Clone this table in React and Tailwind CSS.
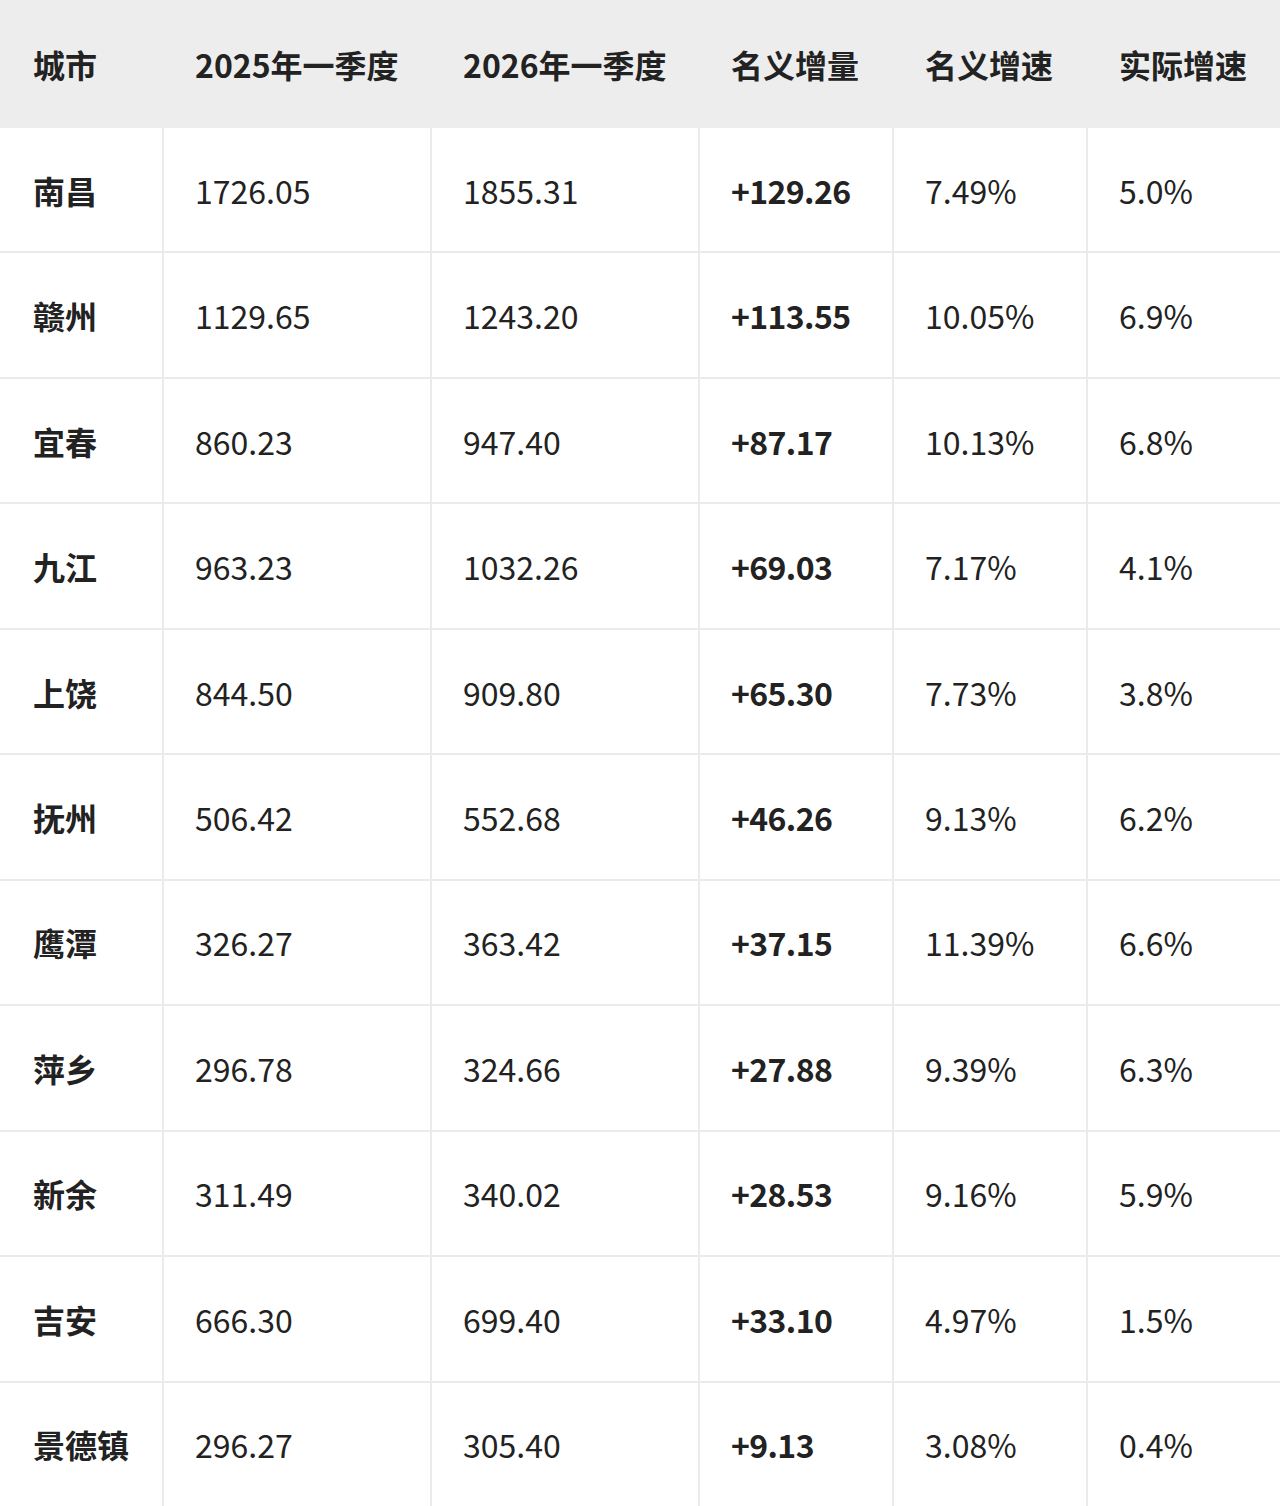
import React from 'react';

const rows = [
  ['南昌', '1726.05', '1855.31', '+129.26', '7.49%', '5.0%'],
  ['赣州', '1129.65', '1243.20', '+113.55', '10.05%', '6.9%'],
  ['宜春', '860.23', '947.40', '+87.17', '10.13%', '6.8%'],
  ['九江', '963.23', '1032.26', '+69.03', '7.17%', '4.1%'],
  ['上饶', '844.50', '909.80', '+65.30', '7.73%', '3.8%'],
  ['抚州', '506.42', '552.68', '+46.26', '9.13%', '6.2%'],
  ['鹰潭', '326.27', '363.42', '+37.15', '11.39%', '6.6%'],
  ['萍乡', '296.78', '324.66', '+27.88', '9.39%', '6.3%'],
  ['新余', '311.49', '340.02', '+28.53', '9.16%', '5.9%'],
  ['吉安', '666.30', '699.40', '+33.10', '4.97%', '1.5%'],
  ['景德镇', '296.27', '305.40', '+9.13', '3.08%', '0.4%'],
];

const headers = ['城市', '2025年一季度', '2026年一季度', '名义增量', '名义增速', '实际增速'];

const cols = 'grid grid-cols-[162px_268px_268px_194px_194px_194px]';

const App = () => {
  return (
    <div className="w-[1280px] h-[1506px] flex flex-col bg-white text-[#222222] font-['Noto_Sans_CJK_SC','Noto_Sans',sans-serif]">
      {/* Header */}
      <div className={`${cols} h-[128px] bg-[#ededed] shrink-0`}>
        {headers.map((h, i) => (
          <div
            key={i}
            className={`flex items-center text-[32px] font-bold ${i === 0 ? 'pl-[33px]' : 'pl-[33px]'}`}
          >
            {h}
          </div>
        ))}
      </div>

      {/* Body */}
      <div className="flex-1 flex flex-col">
        {rows.map((r, ri) => (
          <div
            key={ri}
            className={`${cols} flex-1 ${ri > 0 ? 'border-t-2 border-[#ebebeb]' : ''}`}
          >
            {r.map((c, ci) => (
              <div
                key={ci}
                className={`flex items-center text-[32px] ${
                  ci === 0 ? 'pl-[33px] font-bold' : 'pl-[31px] border-l-2 border-[#ebebeb]'
                } ${ci === 3 ? 'font-bold tracking-[-0.6px]' : ''}`}
              >
                {c}
              </div>
            ))}
          </div>
        ))}
      </div>
    </div>
  );
};

export default App;
